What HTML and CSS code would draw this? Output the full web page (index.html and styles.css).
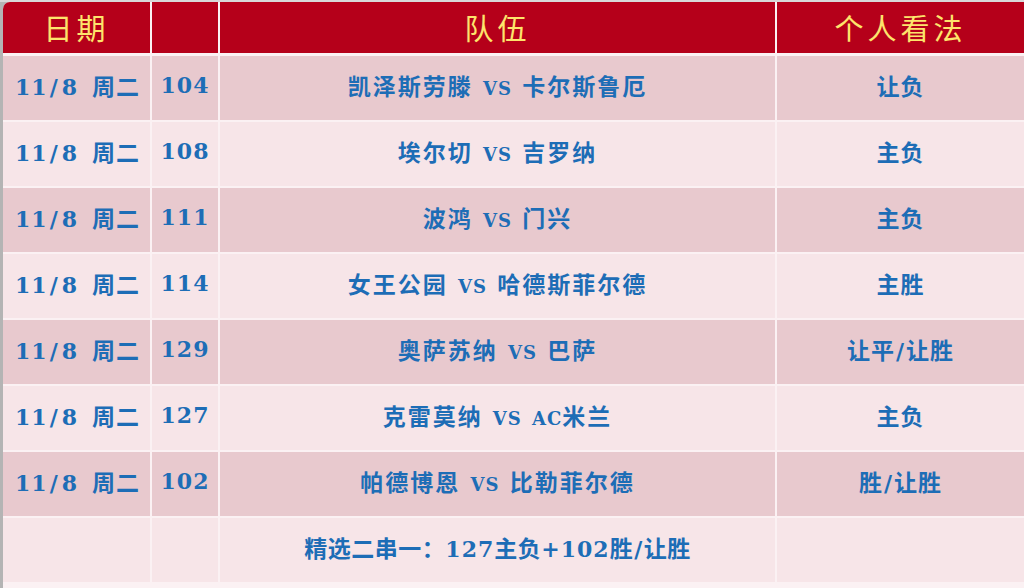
FILE: index.html
```html
<!DOCTYPE html>
<html lang="zh">
<head>
<meta charset="utf-8">
<title>赛事推荐</title>
<link rel="stylesheet" href="styles.css">
</head>
<body>
<div class="frame">
  <div class="board">
    <div class="cell head first"><span>日期</span></div>
    <div class="cell head"></div>
    <div class="cell head"><span>队伍</span></div>
    <div class="cell head"><span>个人看法</span></div>

    <div class="cell dark"><span class="date"><span class="n">11<span class="ds">/</span>8</span>周二</span></div>
    <div class="cell dark"><span class="n">104</span></div>
    <div class="cell dark team"><span>凯泽斯劳滕 <span class="vs">VS</span> 卡尔斯鲁厄</span></div>
    <div class="cell dark"><span>让负</span></div>

    <div class="cell light"><span class="date"><span class="n">11<span class="ds">/</span>8</span>周二</span></div>
    <div class="cell light"><span class="n">108</span></div>
    <div class="cell light team"><span>埃尔切 <span class="vs">VS</span> 吉罗纳</span></div>
    <div class="cell light"><span>主负</span></div>

    <div class="cell dark"><span class="date"><span class="n">11<span class="ds">/</span>8</span>周二</span></div>
    <div class="cell dark"><span class="n">111</span></div>
    <div class="cell dark team"><span>波鸿 <span class="vs">VS</span> 门兴</span></div>
    <div class="cell dark"><span>主负</span></div>

    <div class="cell light"><span class="date"><span class="n">11<span class="ds">/</span>8</span>周二</span></div>
    <div class="cell light"><span class="n">114</span></div>
    <div class="cell light team"><span>女王公园 <span class="vs">VS</span> 哈德斯菲尔德</span></div>
    <div class="cell light"><span>主胜</span></div>

    <div class="cell dark"><span class="date"><span class="n">11<span class="ds">/</span>8</span>周二</span></div>
    <div class="cell dark"><span class="n">129</span></div>
    <div class="cell dark team"><span>奥萨苏纳 <span class="vs">VS</span> 巴萨</span></div>
    <div class="cell dark"><span>让平<span class="sl">/</span>让胜</span></div>

    <div class="cell light"><span class="date"><span class="n">11<span class="ds">/</span>8</span>周二</span></div>
    <div class="cell light"><span class="n">127</span></div>
    <div class="cell light team"><span>克雷莫纳 <span class="vs">VS</span> <span class="vs ac">AC</span>米兰</span></div>
    <div class="cell light"><span>主负</span></div>

    <div class="cell dark"><span class="date"><span class="n">11<span class="ds">/</span>8</span>周二</span></div>
    <div class="cell dark"><span class="n">102</span></div>
    <div class="cell dark team"><span>帕德博恩 <span class="vs">VS</span> 比勒菲尔德</span></div>
    <div class="cell dark"><span>胜<span class="sl">/</span>让胜</span></div>

    <div class="cell light"></div>
    <div class="cell light"></div>
    <div class="cell light"><span class="pick">精选二串一：<span class="n">127</span>主负<span class="n">+102</span>胜<span class="sl">/</span>让胜</span></div>
    <div class="cell light"></div>
  </div>
</div>
</body>
</html>
```

FILE: styles.css
```css
html, body {
  margin: 0;
  padding: 0;
  width: 1024px;
  height: 588px;
  overflow: hidden;
  background: #b4b4b4;
}

.frame {
  padding: 2px 0 0 3px;
  height: 586px;
  box-sizing: border-box;
  background: linear-gradient(#d8d8d8, #d8d8d8) top / 100% 2px no-repeat, #b4b4b4;
}

.board {
  display: grid;
  grid-template-columns: 147px 66px 555px 247px;
  grid-template-rows: 52px repeat(8, 64px);
  column-gap: 2px;
  row-gap: 2px;
  background: #fbf1f3;
  height: 586px;
  box-sizing: border-box;
  padding-bottom: 3px;
  border-top-left-radius: 7px;
  overflow: hidden;
}

.cell {
  display: flex;
  align-items: center;
  justify-content: center;
  padding-bottom: 6px;
  box-sizing: border-box;
  color: #1d6db6;
  font-family: "Noto Sans CJK SC", sans-serif;
  font-weight: 700;
  font-size: 23px;
  letter-spacing: 1px;
  white-space: nowrap;
}

.team {
  letter-spacing: 2px;
}

.date {
  display: flex;
  align-items: baseline;
  gap: 14px;
  padding-left: 2px;
}

.n {
  font-family: "DejaVu Serif", serif;
  font-size: 22px;
  letter-spacing: 1px;
}

.ds {
  padding: 0 3px 0 2px;
}

.head {
  background: #b5001a;
  color: #fde46c;
  font-weight: 400;
  font-size: 29px;
  letter-spacing: 4px;
  padding-bottom: 2px;
  margin-bottom: 1px;
}

.dark {
  background: #e8c9ce;
}

.light {
  background: #f7e5e8;
}

.vs {
  font-family: "DejaVu Serif", serif;
  font-size: 18px;
  letter-spacing: 1px;
  padding: 0 3px;
}

.ac {
  padding: 0;
}

.sl {
  font-family: "DejaVu Serif", serif;
  font-size: 22px;
  padding: 0 1px;
}

.pick {
  letter-spacing: 0.5px;
}
```
